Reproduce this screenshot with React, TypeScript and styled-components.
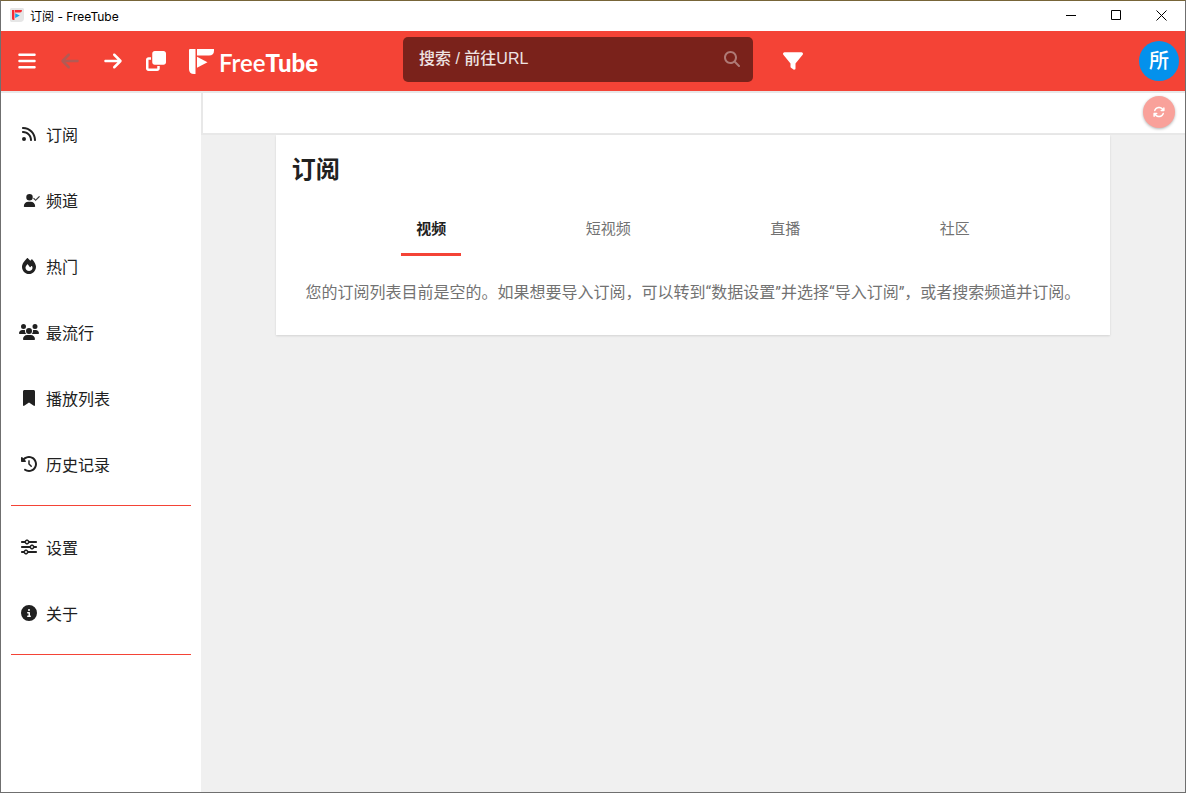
import React from "react";
import styled, { createGlobalStyle, css } from "styled-components";
import {
  FaArrowLeft,
  FaArrowRight,
  FaArrowsRotate,
  FaBars,
  FaBookmark,
  FaCheck,
  FaCircleInfo,
  FaClockRotateLeft,
  FaClone,
  FaFilter,
  FaFire,
  FaMagnifyingGlass,
  FaRss,
  FaSliders,
  FaUser,
  FaUsers,
} from "react-icons/fa6";

const colors = {
  primary: "#f44336",
  primaryDark: "#7a221b",
  text: "#212121",
  muted: "#727272",
  page: "#f0f0f0",
  card: "#ffffff",
  frame: "#6f6f6f",
  edge: "#e8e8e8",
};

const GlobalStyle = createGlobalStyle`
  *, *::before, *::after { box-sizing: border-box; }
  body {
    margin: 0;
    background: ${colors.page};
    color: ${colors.text};
    font-family: Roboto, "Noto Sans CJK SC", sans-serif;
    font-size: 16px;
  }
  button, input { font: inherit; }
`;

const Window = styled.div`
  display: flex;
  flex-direction: column;
  min-height: 100vh;
  border: 1px solid ${colors.frame};
  border-top-color: #776538;
`;

const TitleBar = styled.div`
  display: flex;
  align-items: center;
  height: 30px;
  padding: 0 1px 2px 9px;
  background: #fff;
  color: #000;
  font-family: Inter, "Noto Sans CJK SC", sans-serif;
  font-size: 12px;
`;

const WindowTitle = styled.span`
  flex: 1;
  padding-left: 6px;
`;

const CaptionButton = styled.button`
  display: grid;
  place-items: center;
  width: 45px;
  height: 28px;
  padding: 0;
  border: 0;
  background: none;
`;

const Header = styled.header`
  display: flex;
  align-items: center;
  height: 60px;
  background: ${colors.primary};
  color: #fff;
`;

const HeaderStart = styled.div`
  display: flex;
  align-items: center;
  width: 402px;
  padding-left: 4px;
`;

const IconButton = styled.button`
  display: grid;
  place-items: center;
  width: 43px;
  height: 40px;
  padding: 0;
  border: 0;
  background: none;
  color: #fff;
  font-size: 20px;

  &:disabled {
    color: ${colors.muted};
    opacity: 0.5;
  }
`;

const LogoLink = styled.a`
  display: flex;
  align-items: center;
  gap: 5px;
  margin-left: 12px;
  color: #fff;
  text-decoration: none;
`;

const LogoText = styled.span`
  padding-top: 4px;
  font-family: Lato, sans-serif;
  font-size: 24px;
  font-weight: 600;
  line-height: 28px;

  b {
    font-weight: 900;
  }
`;

const SearchForm = styled.form`
  display: flex;
  align-items: center;
  width: 350px;
  height: 45px;
  margin: 0 18px 4px 0;
  padding: 0 3px 0 16px;
  border-radius: 5px;
  background: ${colors.primaryDark};
`;

const SearchInput = styled.input`
  flex: 1;
  min-width: 0;
  padding: 0;
  border: 0;
  outline: 0;
  background: none;
  color: #fff;
  font-family: "Liberation Sans", "Noto Sans CJK SC", sans-serif;

  &::placeholder {
    color: #eee3e2;
    font-weight: 500;
    opacity: 1;
  }
`;

const SearchButton = styled(IconButton)`
  width: 36px;
  color: #af7a76;
  font-size: 16px;
`;

const Avatar = styled.button`
  width: 40px;
  height: 40px;
  margin: 0 6px 0 auto;
  padding: 0;
  border: 0;
  border-radius: 50%;
  background: #0491ec;
  color: #fff;
  font-size: 20px;
  font-weight: 500;
  line-height: 40px;
`;

const Body = styled.div`
  display: flex;
  flex: 1;
`;

const SideNav = styled.nav`
  width: 200px;
  padding-top: 10px;
  background: ${colors.card};
  box-shadow: inset 0 2px ${colors.edge};
`;

const NavItem = styled.a`
  display: flex;
  align-items: center;
  gap: 7px;
  height: 66px;
  padding-left: 18px;
  color: ${colors.text};
  text-decoration: none;
`;

const NavIcon = styled.span`
  position: relative;
  display: grid;
  place-items: center;
  width: 20px;
  height: 20px;
  font-size: 16px;
`;

const ChannelBadge = styled(FaCheck)`
  position: absolute;
  top: 5px;
  right: -1px;
  font-size: 7px;
  stroke: currentColor;
  stroke-width: 24px;
`;

const Divider = styled.hr`
  height: 1px;
  margin: 8px 10px;
  border: 0;
  background: ${colors.primary};
`;

const Main = styled.main`
  flex: 1;
  min-width: 0;
`;

const RefreshBar = styled.div`
  display: flex;
  align-items: center;
  justify-content: flex-end;
  height: 44px;
  padding: 0 10px 2px 0;
  border: solid ${colors.edge};
  border-width: 2px 0 2px 2px;
  background: ${colors.card};
`;

const RefreshButton = styled.button`
  display: grid;
  place-items: center;
  width: 32px;
  height: 32px;
  padding: 0;
  border: 0;
  border-radius: 50%;
  background: #f9a19a;
  box-shadow: 0 1px 3px rgba(0, 0, 0, 0.3);
  color: #fff;
  font-size: 12px;
`;

const Card = styled.section`
  width: calc(85% - 2px);
  margin: 0 auto;
  padding: 17px 16px 30px;
  background: ${colors.card};
  box-shadow: 0 1px 2px rgba(0, 0, 0, 0.12);
`;

const Heading = styled.h2`
  margin: 0;
  font-size: 24px;
  font-weight: 700;
  line-height: 36px;
`;

const Tabs = styled.div`
  display: flex;
  justify-content: space-evenly;
  margin-top: 13px;
`;

const Tab = styled.button<{ $active?: boolean }>`
  height: 55px;
  padding: 0 15px;
  border: 0;
  border-bottom: 3px solid transparent;
  background: none;
  color: ${colors.muted};
  font-size: 15px;
  ${({ $active }) =>
    $active &&
    css`
      border-color: ${colors.primary};
      color: ${colors.text};
      font-weight: 700;
    `}
`;

const Message = styled.p`
  margin: 25px 0 0;
  color: ${colors.muted};
  line-height: 24px;
  text-align: center;
`;

const mainLinks = [
  { label: "订阅", icon: <FaRss /> },
  {
    label: "频道",
    icon: (
      <>
        <FaUser size={13} />
        <ChannelBadge />
      </>
    ),
  },
  { label: "热门", icon: <FaFire /> },
  { label: "最流行", icon: <FaUsers size={20} /> },
  { label: "播放列表", icon: <FaBookmark /> },
  { label: "历史记录", icon: <FaClockRotateLeft /> },
];

const moreLinks = [
  { label: "设置", icon: <FaSliders /> },
  { label: "关于", icon: <FaCircleInfo /> },
];

const tabs = ["视频", "短视频", "直播", "社区"];

function AppIcon() {
  return (
    <svg width="14" height="14" viewBox="0 0 14 14" aria-hidden="true">
      <path d="M1 0h12l1 1v9q0 4-4 4H1l-1-1V1z" fill="#e6e6e6" />
      <path d="M2 2h2.400v10H3.500Q2 12 2 10.500zM5 2h7q0 2.500-2 2.500H5z" fill="#f52c34" />
      <path d="M5.200 5.200 9.800 7.600 5.200 10z" fill="#14a3e8" />
    </svg>
  );
}

function LogoMark() {
  return (
    <svg width="25" height="25" viewBox="0 0 25 25" fill="#fff" aria-hidden="true">
      <path d="M1 0h5.500v25H5Q0 25 0 20V1q0-1 1-1z" />
      <path d="M8 0h17v1.500Q25 6.500 20 6.500H8z" />
      <path d="M8 7.800 18.500 13.200 8 18.800z" />
    </svg>
  );
}

function NavLinks({ links }: { links: typeof mainLinks }) {
  return (
    <>
      {links.map(({ label, icon }) => (
        <NavItem key={label} href="#">
          <NavIcon>{icon}</NavIcon>
          {label}
        </NavItem>
      ))}
    </>
  );
}

export default function App() {
  return (
    <Window>
      <GlobalStyle />
      <TitleBar>
        <AppIcon />
        <WindowTitle>订阅 - FreeTube</WindowTitle>
        <CaptionButton aria-label="最小化">
          <svg width="11" height="11" viewBox="0 0 11 11" stroke="#000">
            <path d="M0 5.500h10" />
          </svg>
        </CaptionButton>
        <CaptionButton aria-label="最大化">
          <svg width="11" height="11" viewBox="0 0 11 11" fill="none" stroke="#000">
            <path d="M.5.500h9v9h-9z" />
          </svg>
        </CaptionButton>
        <CaptionButton aria-label="关闭">
          <svg width="11" height="11" viewBox="0 0 11 11" stroke="#000">
            <path d="m.5.500 10 10m0-10-10 10" />
          </svg>
        </CaptionButton>
      </TitleBar>
      <Header>
        <HeaderStart>
          <IconButton aria-label="菜单"><FaBars /></IconButton>
          <IconButton aria-label="后退" disabled><FaArrowLeft /></IconButton>
          <IconButton aria-label="前进"><FaArrowRight /></IconButton>
          <IconButton aria-label="新窗口"><FaClone /></IconButton>
          <LogoLink href="#">
            <LogoMark />
            <LogoText>Free<b>Tube</b></LogoText>
          </LogoLink>
        </HeaderStart>
        <SearchForm>
          <SearchInput aria-label="搜索" placeholder="搜索 / 前往URL" />
          <SearchButton type="button" aria-label="搜索"><FaMagnifyingGlass /></SearchButton>
        </SearchForm>
        <IconButton aria-label="筛选"><FaFilter /></IconButton>
        <Avatar aria-label="所有频道">所</Avatar>
      </Header>
      <Body>
        <SideNav>
          <NavLinks links={mainLinks} />
          <Divider />
          <NavLinks links={moreLinks} />
          <Divider />
        </SideNav>
        <Main>
          <RefreshBar>
            <RefreshButton aria-label="刷新"><FaArrowsRotate /></RefreshButton>
          </RefreshBar>
          <Card>
            <Heading>订阅</Heading>
            <Tabs role="tablist">
              {tabs.map((label, index) => (
                <Tab key={label} role="tab" aria-selected={index === 0} $active={index === 0}>
                  {label}
                </Tab>
              ))}
            </Tabs>
            <Message>
              您的订阅列表目前是空的。如果想要导入订阅，可以转到“数据设置”并选择“导入订阅”，或者搜索频道并订阅。
            </Message>
          </Card>
        </Main>
      </Body>
    </Window>
  );
}
